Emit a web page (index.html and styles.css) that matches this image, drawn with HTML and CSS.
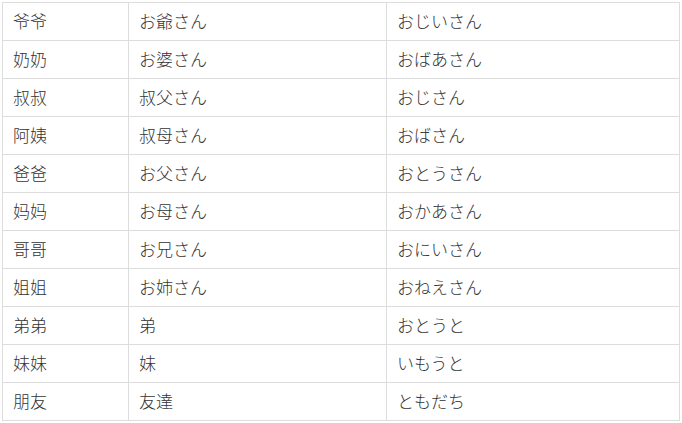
FILE: index.html
```html
<!DOCTYPE html>
<html lang="zh">
<head>
<meta charset="utf-8">
<link rel="stylesheet" href="styles.css">
</head>
<body>
<table class="vocab">
<colgroup><col class="c1"><col class="c2"><col class="c3"></colgroup>
<tbody>
<tr><td>爷爷</td><td>お爺さん</td><td>おじいさん</td></tr>
<tr><td>奶奶</td><td>お婆さん</td><td>おばあさん</td></tr>
<tr><td>叔叔</td><td>叔父さん</td><td>おじさん</td></tr>
<tr><td>阿姨</td><td>叔母さん</td><td>おばさん</td></tr>
<tr><td>爸爸</td><td>お父さん</td><td>おとうさん</td></tr>
<tr><td>妈妈</td><td>お母さん</td><td>おかあさん</td></tr>
<tr><td>哥哥</td><td>お兄さん</td><td>おにいさん</td></tr>
<tr><td>姐姐</td><td>お姉さん</td><td>おねえさん</td></tr>
<tr><td>弟弟</td><td>弟</td><td>おとうと</td></tr>
<tr><td>妹妹</td><td>妹</td><td>いもうと</td></tr>
<tr><td>朋友</td><td>友達</td><td>ともだち</td></tr>
</tbody>
</table>
</body>
</html>
```
FILE: styles.css
```css
html, body { background: #fff; }
body {
  margin: 2px;
  font-family: "Noto Sans CJK SC", "Noto Sans", sans-serif;
  font-size: 17px;
  font-weight: 300;
  color: #333;
}
.vocab {
  border-collapse: collapse;
  table-layout: fixed;
  width: 677px;
}
.vocab .c1 { width: 126px; }
.vocab .c2 { width: 258px; }
.vocab .c3 { width: 293px; }
.vocab td {
  border: 1px solid #ddd;
  height: 37px;
  padding: 0 10px 2px;
  box-sizing: border-box;
  vertical-align: middle;
  line-height: 20px;
  white-space: nowrap;
}
.vocab tr { height: 38px; }
```
